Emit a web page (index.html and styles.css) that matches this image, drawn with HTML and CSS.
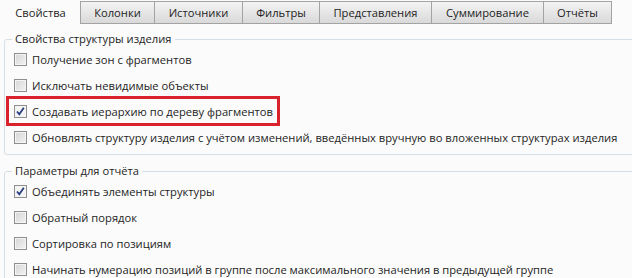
FILE: index.html
```html
<!DOCTYPE html>
<html lang="ru">
<head>
  <meta charset="UTF-8">
  <title>Свойства отчёта</title>
  <link rel="stylesheet" href="styles.css">
</head>
<body>

  <div class="tabs">
    <div class="tab active">Свойства</div>
    <div class="tab">Колонки</div>
    <div class="tab">Источники</div>
    <div class="tab">Фильтры</div>
    <div class="tab">Представления</div>
    <div class="tab">Суммирование</div>
    <div class="tab">Отчёты</div>
  </div>

  <fieldset class="group">
    <legend>Свойства структуры изделия</legend>
    <label class="row"><span class="box"></span>Получение зон с фрагментов</label>
    <label class="row"><span class="box"></span>Исключать невидимые объекты</label>
    <label class="row marked"><span class="box checked"></span>Создавать иерархию по дереву фрагментов</label>
    <label class="row"><span class="box"></span>Обновлять структуру изделия с учётом изменений, введённых вручную во вложенных структурах изделия</label>
  </fieldset>

  <fieldset class="group">
    <legend>Параметры для отчёта</legend>
    <label class="row"><span class="box checked"></span>Объединять элементы структуры</label>
    <label class="row"><span class="box"></span>Обратный порядок</label>
    <label class="row"><span class="box"></span>Сортировка по позициям</label>
    <label class="row"><span class="box"></span>Начинать нумерацию позиций в группе после максимального значения в предыдущей группе</label>
  </fieldset>

</body>
</html>
```

FILE: styles.css
```css
body {
  margin: 0;
  background: #fbfbfb;
  font-family: "Open Sans", "Noto Sans", sans-serif;
  font-size: 11.2px;
  color: #1e1e1e;
  overflow: hidden;
  width: 632px;
  height: 278px;
}

/* tab strip */
.tabs {
  display: flex;
  height: 24px;
}

.tab {
  height: 23px;
  margin-top: 1px;
  margin-left: -1px;
  box-sizing: border-box;
  line-height: 21px;
  text-align: center;
  border: 1px solid #a3a3a3;
  background: linear-gradient(#f3f3f3, #e6e6e6 50%, #d9d9d9);
  white-space: nowrap;
}

.tab:nth-child(2) { width: 75px; }
.tab:nth-child(3) { width: 89px; }
.tab:nth-child(4) { width: 78px; }
.tab:nth-child(5) { width: 113px; }
.tab:nth-child(6) { width: 113px; }
.tab:nth-child(7) { width: 69px; }

.tab.active {
  width: 81px;
  height: 24px;
  margin: 0;
  border: none;
  background: #fbfbfb;
  line-height: 26px;
}

/* group boxes */
.group {
  margin: 7px -20px 0 4px;
  padding: 0 0 4px 9px;
  border: 1px solid #d5dfe5;
  border-radius: 3px;
}

.group + .group {
  margin-top: 8px;
}

.group legend {
  padding: 0 3px;
  margin-left: -2px;
  line-height: 16px;
}

.row {
  position: relative;
  display: flex;
  align-items: center;
  height: 26px;
  white-space: nowrap;
  width: max-content;
}

.row:first-of-type {
  margin-top: -1px;
}

.box {
  width: 13px;
  height: 13px;
  box-sizing: border-box;
  margin-right: 5px;
  border: 1px solid #8e8f8f;
  background: linear-gradient(135deg, #d6d6d6, #f2f2f2);
  box-shadow: inset 0 0 0 1px #f4f4f4;
}

.box.checked {
  background: #f4f4f4 url("data:image/svg+xml,%3Csvg xmlns='http://www.w3.org/2000/svg' width='11' height='11'%3E%3Cpath d='M2 5.5 L4.3 8.3 L8.8 1.8' fill='none' stroke='%23263e7e' stroke-width='1.8'/%3E%3C/svg%3E") center / 11px 11px no-repeat;
}

/* red annotation frame */
.row.marked::after {
  content: "";
  position: absolute;
  top: -2px;
  bottom: -2px;
  left: -8px;
  right: -7px;
  border: 3px solid #d9222c;
}
```
